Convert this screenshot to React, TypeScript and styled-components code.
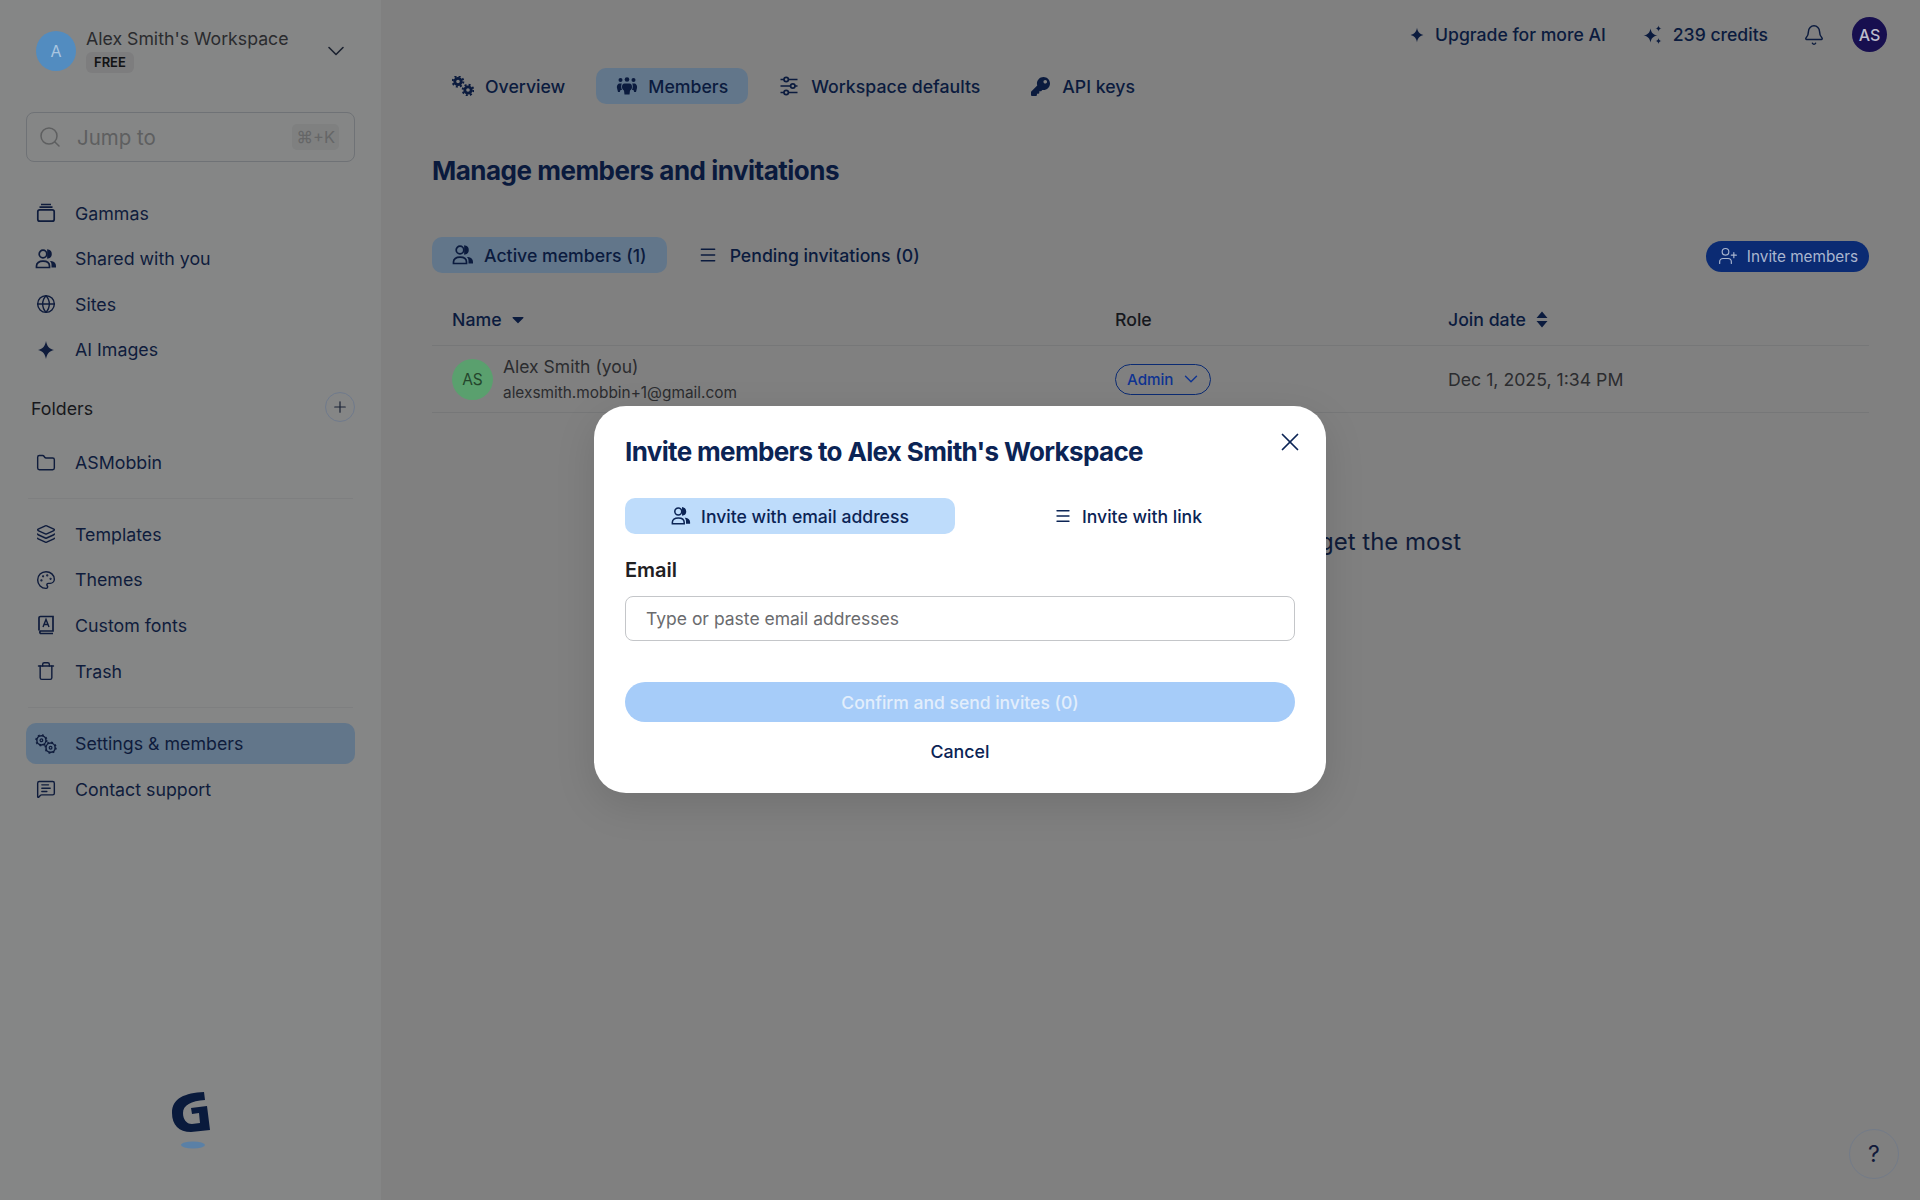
import React from "react";
import styled, { createGlobalStyle } from "styled-components";
import {
  Bell,
  ChevronDown,
  Folder,
  Globe,
  Layers,
  Menu,
  MessageSquareText,
  Palette,
  Plus,
  Search,
  Trash,
  UserPlus,
  X,
} from "lucide-react";
import { FaKey } from "react-icons/fa";

const NAVY = "#0b1b3e";
const FONT = `Inter, "Noto Sans", sans-serif`;

const GlobalStyle = createGlobalStyle`
  html, body {
    margin: 0;
    padding: 0;
    background: #808080;
    font-family: ${FONT};
    color: ${NAVY};
  }
  * { box-sizing: border-box; }
`;

const Page = styled.div`
  display: flex;
  width: 1920px;
  height: 1200px;
  overflow: hidden;
  position: relative;
  background: #808080;
`;

/* sidebar */
const Sidebar = styled.aside`
  display: flex;
  flex-direction: column;
  flex: none;
  width: 381px;
  height: 100%;
  padding: 31px 26px 51px;
  background: #858686;
`;
const WorkspaceRow = styled.div`
  display: flex;
  align-items: flex-start;
  height: 40px;
  padding-left: 10px;
`;
const WorkspaceAvatar = styled.div`
  display: flex;
  align-items: center;
  justify-content: center;
  width: 40px;
  height: 40px;
  flex: none;
  border-radius: 50%;
  background: #528cc0;
  color: #a9c6e0;
  font-size: 16px;
`;
const WorkspaceInfo = styled.div`
  display: flex;
  flex-direction: column;
  align-items: flex-start;
  margin-left: 10px;
  flex: 1;
`;
const WorkspaceName = styled.div`
  font-size: 17.7px;
  line-height: 16px;
  color: #2a2b2e;
  white-space: nowrap;
`;
const PlanBadge = styled.div`
  margin-top: 5px;
  padding: 0 8px;
  height: 21px;
  line-height: 21px;
  border-radius: 6px;
  background: #7d7d7e;
  color: #111214;
  font-size: 13px;
  font-weight: 600;
`;
const Chevron = styled.div`
  display: flex;
  margin: 0 5px 0 0;
  padding-top: 6px;
  color: #1c2230;
`;
const SearchBox = styled.div`
  display: flex;
  align-items: center;
  height: 50px;
  margin-top: 41px;
  padding: 0 15px 0 11px;
  border: 1.5px solid #6f7276;
  border-radius: 8px;
  color: #5e5f60;
  font-size: 20.5px;
`;
const SearchLabel = styled.span`
  flex: 1;
  margin-left: 15px;
`;
const Shortcut = styled.span`
  padding: 3px 4px;
  border-radius: 5px;
  background: #7f8080;
  font-size: 16.5px;
  color: #656667;
`;
const NavList = styled.nav<{ $top: number }>`
  display: flex;
  flex-direction: column;
  gap: 4.6px;
  margin-top: ${(p) => p.$top}px;
`;
const NavItem = styled.div<{ $active?: boolean }>`
  display: flex;
  align-items: center;
  height: 41px;
  padding-left: 9px;
  border-radius: 10px;
  background: ${(p) => (p.$active ? "#62768a" : "transparent")};
  font-size: 17.8px;
  color: #0f1c3c;
`;
const NavIcon = styled.span`
  display: flex;
  justify-content: center;
  width: 22px;
  margin-right: 18px;
  flex: none;
  color: #0f1c3c;
`;
const FoldersRow = styled.div`
  display: flex;
  align-items: center;
  justify-content: space-between;
  height: 32px;
  margin-top: 21px;
  padding-left: 5px;
  font-size: 17.8px;
  color: #17181c;
`;
const FolderLabel = styled.span`
  padding-top: 3px;
`;
const RoundAdd = styled.div`
  display: flex;
  align-items: center;
  justify-content: center;
  width: 30px;
  height: 30px;
  border-radius: 50%;
  border: 1px solid #6f7a8c;
  color: #1a2336;
`;
const Divider = styled.div<{ $above: number; $below: number }>`
  height: 1px;
  margin: ${(p) => p.$above}px 2px ${(p) => p.$below}px;
  background: #7e7f80;
`;
const LogoSlot = styled.div`
  display: flex;
  justify-content: center;
  margin-top: auto;
`;

/* main column */
const Main = styled.main`
  flex: 1;
  min-width: 0;
  padding: 17px 51px 0;
`;
const TopBar = styled.div`
  display: flex;
  align-items: center;
  justify-content: flex-end;
  height: 35px;
  margin-right: -18px;
  font-size: 17.6px;
  font-weight: 500;
`;
const TopItem = styled.div<{ $gap: number }>`
  display: flex;
  align-items: center;
  gap: 10px;
  margin-right: ${(p) => p.$gap}px;
  color: ${NAVY};
`;
const UserAvatar = styled.div`
  display: flex;
  align-items: center;
  justify-content: center;
  width: 35px;
  height: 35px;
  border-radius: 50%;
  background: #170f4f;
  color: #bdbccb;
  font-size: 16px;
  margin-left: 27px;
`;
const PageTabs = styled.div`
  display: flex;
  gap: 11px;
  margin-top: 16px;
`;
const Tab = styled.div<{ $active?: boolean; $gap?: number }>`
  display: flex;
  align-items: center;
  gap: ${(p) => p.$gap ?? 12}px;
  height: 36px;
  padding: 0 20px;
  border-radius: 10px;
  background: ${(p) => (p.$active ? "#62768a" : "transparent")};
  font-size: 17.7px;
  font-weight: 500;
  color: ${NAVY};
  white-space: nowrap;
`;
const Heading = styled.h1`
  margin: 51px 0 0;
  font-size: 26px;
  line-height: 32px;
  font-weight: 700;
  letter-spacing: -0.5px;
  color: #0a1a3d;
`;
const SubTabsRow = styled.div`
  display: flex;
  align-items: center;
  justify-content: space-between;
  margin-top: 50px;
`;
const SubTabs = styled.div`
  display: flex;
  gap: 11px;
`;
const InviteButton = styled.div`
  display: flex;
  align-items: center;
  gap: 9px;
  height: 31px;
  margin-top: 2px;
  padding: 0 11px 0 12px;
  border-radius: 16px;
  background: #0b2b73;
  color: #aab6cf;
  font-size: 15.3px;
`;
const TableRow = styled.div<{ $head?: boolean }>`
  display: grid;
  grid-template-columns: 683px 333px 1fr;
  align-items: center;
  height: ${(p) => (p.$head ? 51 : 67)}px;
  margin-top: ${(p) => (p.$head ? 22 : 0)}px;
  padding-left: 20px;
  border-bottom: 1px solid #767778;
`;
const HeadCell = styled.div`
  display: flex;
  align-items: center;
  gap: 10px;
  font-size: 17.7px;
  font-weight: 500;
  color: ${NAVY};
  padding-bottom: 1px;
`;
const RoleHead = styled(HeadCell)`
  color: #16181d;
  margin-left: -20px;
`;
const DateHead = styled(HeadCell)`
  margin-left: -20px;
`;
const MemberCell = styled.div`
  display: flex;
  align-items: center;
  gap: 10px;
`;
const MemberAvatar = styled.div`
  display: flex;
  align-items: center;
  justify-content: center;
  width: 41px;
  height: 41px;
  border-radius: 50%;
  background: #5aa06e;
  color: #24452c;
  font-size: 15.5px;
`;
const MemberText = styled.div`
  display: flex;
  flex-direction: column;
  gap: 8px;
  padding-top: 1px;
`;
const MemberName = styled.div`
  font-size: 17.5px;
  line-height: 18px;
  color: #2b2c2f;
`;
const MemberMail = styled.div`
  font-size: 15.4px;
  line-height: 18px;
  color: #2b2c2f;
`;
const RolePill = styled.div`
  display: inline-flex;
  align-items: center;
  justify-content: space-between;
  width: 96px;
  height: 31px;
  margin-left: -20px;
  padding: 0 8px 0 11px;
  border: 1.5px solid #0b2b73;
  border-radius: 16px;
  color: #0e3391;
  font-size: 15.2px;
  font-weight: 500;
`;
const DateCell = styled.div`
  margin-left: -20px;
  font-size: 17.7px;
  color: #2b2c2f;
`;
const Notice = styled.div`
  display: flex;
  justify-content: flex-end;
  margin-top: 116px;
  padding-right: 408px;
  font-size: 24px;
  line-height: 26px;
  color: #0f1b38;
`;
const HelpButton = styled.div`
  position: absolute;
  right: 21px;
  bottom: 21px;
  display: flex;
  align-items: center;
  justify-content: center;
  width: 50px;
  height: 50px;
  border-radius: 50%;
  border: 1.5px solid #737b88;
  background: #808080;
  color: #11193a;
  font-size: 23px;
`;

/* modal */
const Overlay = styled.div`
  position: absolute;
  inset: 0;
  display: flex;
  align-items: center;
  justify-content: center;
  padding-bottom: 1px;
`;
const Modal = styled.div`
  position: relative;
  width: 732px;
  height: 387px;
  padding: 30px 31px 0;
  border-radius: 32px;
  background: #fff;
  box-shadow: 0 12px 40px rgba(0, 0, 0, 0.12);
`;
const ModalTitle = styled.h2`
  margin: 0;
  font-size: 26px;
  line-height: 32px;
  font-weight: 700;
  letter-spacing: -0.65px;
  color: #0b2455;
`;
const CloseIcon = styled.div`
  position: absolute;
  top: 21px;
  right: 21px;
  color: #0b2455;
  display: flex;
`;
const ModalTabs = styled.div`
  display: grid;
  grid-template-columns: 330px 1fr;
  gap: 10px;
  margin-top: 30px;
`;
const ModalTab = styled.div<{ $active?: boolean }>`
  display: flex;
  align-items: center;
  justify-content: center;
  gap: 10px;
  height: 36px;
  padding-right: ${(p) => (p.$active ? 0 : 4)}px;
  border-radius: 10px;
  background: ${(p) => (p.$active ? "#bedcfb" : "transparent")};
  color: #0b2455;
  font-size: 17.6px;
  font-weight: 500;
`;
const FieldLabel = styled.div`
  margin-top: 24px;
  font-size: 20px;
  line-height: 24px;
  font-weight: 600;
  color: #1f2023;
`;
const EmailInput = styled.input`
  display: block;
  width: 100%;
  height: 45px;
  margin-top: 14px;
  padding: 0 20px;
  border: 1.5px solid #c4c6c9;
  border-radius: 8px;
  outline: none;
  font-family: ${FONT};
  font-size: 17.5px;
  &::placeholder {
    color: #6a6b6e;
    opacity: 1;
  }
`;
const ConfirmButton = styled.div`
  display: flex;
  align-items: center;
  justify-content: center;
  height: 40px;
  margin-top: 41px;
  border-radius: 20px;
  background: #a6ccf9;
  color: #e2eefc;
  font-size: 17.5px;
  font-weight: 500;
`;
const CancelLink = styled.div`
  margin-top: 18px;
  text-align: center;
  font-size: 17.8px;
  line-height: 24px;
  font-weight: 500;
  color: #0b2455;
`;

/* drawn icons */
const Sparkle = ({ size = 20 }: { size?: number }) => (
  <svg width={size} height={size} viewBox="0 0 20 20" fill="currentColor">
    <path d="M10 1c.9 5 3 7.700 8 9-5 1.300-7.100 4-8 9-.9-5-3-7.700-8-9 5-1.300 7.100-4 8-9z" />
  </svg>
);
const Sparkles = () => (
  <svg width="20" height="20" viewBox="0 0 20 20" fill="currentColor">
    <path d="M7.500 3.500c.8 4.300 2.600 6.200 7 7-4.400.8-6.200 2.700-7 7-.8-4.300-2.600-6.200-7-7 4.400-.8 6.200-2.700 7-7z" />
    <path d="M15.500 .5c.3 1.900 1.100 2.700 3 3-1.900.3-2.700 1.100-3 3-.3-1.900-1.100-2.700-3-3 1.900-.3 2.700-1.100 3-3zM15.500 13c.3 1.900 1.100 2.700 3 3-1.900.3-2.700 1.100-3 3-.3-1.900-1.100-2.700-3-3 1.900-.3 2.700-1.100 3-3z" />
  </svg>
);
const GammasIcon = () => (
  <svg width="20" height="20" viewBox="0 0 20 20" fill="none" stroke="currentColor" strokeWidth="1.700">
    <rect x="1.800" y="6.800" width="16.400" height="11.400" rx="2" />
    <path d="M3.500 4.200h13M5 1.500h10" />
  </svg>
);
const PeopleIcon = ({ size = 22 }: { size?: number }) => (
  <svg width={size} height={size} viewBox="0 0 22 22" fill="none" stroke="currentColor" strokeWidth="1.700">
    <circle cx="8" cy="6" r="3.800" />
    <path d="M1.500 19.500v-1.500c0-3 2.500-4.800 6.500-4.800s6.500 1.800 6.500 4.800v1.500z" />
    <path d="M13 2.300a3.800 3.800 0 0 1 0 7.400z" fill="currentColor" />
    <path d="M16 13c3 .4 5 2 5 5v1.500h-4.500v-2.500c0-1.600-.5-2.800-1.500-4z" fill="currentColor" stroke="none" />
  </svg>
);
const BookIcon = () => (
  <svg width="20" height="20" viewBox="0 0 20 20" fill="none" stroke="currentColor" strokeWidth="1.700">
    <path d="M3 15.500V3a1.500 1.500 0 0 1 1.500-1.500H17v14.500H4.500a1.500 1.500 0 0 0 0 2.500H17" />
    <path d="M7 12l3-7.500 3 7.500M8.200 9.500h3.600" strokeWidth="1.400" />
  </svg>
);
const GearsIcon = () => (
  <svg width="24" height="22" viewBox="0 0 24 22" fill="none" stroke="currentColor">
    <circle cx="7" cy="7" r="5" strokeWidth="1.600" />
    <circle cx="7" cy="7" r="5.900" strokeWidth="1.600" strokeDasharray="2 2.630" />
    <circle cx="7" cy="7" r="1.500" strokeWidth="1.300" />
    <circle cx="17" cy="15" r="5" strokeWidth="1.600" />
    <circle cx="17" cy="15" r="5.900" strokeWidth="1.600" strokeDasharray="2 2.630" />
    <circle cx="17" cy="15" r="1.500" strokeWidth="1.300" />
  </svg>
);
const SolidGears = () => (
  <svg width="22" height="20" viewBox="0 0 22 20" fill="none" stroke="currentColor">
    <circle cx="6" cy="5.500" r="3.200" strokeWidth="2.800" />
    <circle cx="6" cy="5.500" r="5.300" strokeWidth="2" strokeDasharray="2 2.160" />
    <circle cx="16" cy="14" r="3.200" strokeWidth="2.800" />
    <circle cx="16" cy="14" r="5.300" strokeWidth="2" strokeDasharray="2 2.160" />
  </svg>
);
const MembersIcon = () => (
  <svg width="22" height="18" viewBox="0 0 22 18" fill="currentColor">
    <circle cx="4.500" cy="3" r="2" />
    <circle cx="11" cy="2.500" r="2.300" />
    <circle cx="17.500" cy="3" r="2" />
    <path d="M3.500 6.500h2.300C5 8 5 11 6 13H4.500L3.800 15H2L1 11c-.5-2 .8-4.500 2.500-4.500z" />
    <path d="M18.500 6.500h-2.300C17 8 17 11 16 13h1.500l.7 2H20l1-4c.5-2-.8-4.500-2.500-4.500z" />
    <path d="M8.500 6.500h5c1.700 0 2.500 1.500 2.500 3.500 0 2-1 3-2 3.500l-.5 4h-5l-.5-4c-1-.5-2-1.500-2-3.500 0-2 .8-3.500 2.500-3.500z" />
  </svg>
);
const SlidersIcon = () => (
  <svg width="20" height="20" viewBox="0 0 20 20" fill="none" stroke="currentColor" strokeWidth="1.700">
    <path d="M1.500 3.500h3.500M9.500 3.500h9M1.500 10h10M16 10h2.500M1.500 16.500h3.500M9.500 16.500h9" />
    <circle cx="7.200" cy="3.500" r="2.200" />
    <circle cx="13.800" cy="10" r="2.200" />
    <circle cx="7.200" cy="16.500" r="2.200" />
  </svg>
);
const GammaLogo = () => (
  <svg width="40" height="58" viewBox="0 0 40 58">
    <path
      fill="#091a3c"
      d="M33 1C14 2 1 7 1 22c0 12 7 19 19 19l19-2-3-24-16 2 1 6 7-1 1 10-8 1c-6 0-9-5-9-11 0-8 8-12 22-13z"
    />
    <ellipse cx="22" cy="54" rx="12" ry="3.500" fill="#5a80a6" />
  </svg>
);
const SortDown = () => (
  <svg width="12" height="8" viewBox="0 0 12 8" fill="currentColor">
    <path d="M1 1h10a.6.6 0 0 1 .4 1L6.400 7a.6.6 0 0 1-.8 0L.6 2A.6.6 0 0 1 1 1z" />
  </svg>
);
const SortBoth = () => (
  <svg width="12" height="17" viewBox="0 0 12 17" fill="currentColor">
    <path d="M6 .5l5.500 6.500H.5zM6 16.500L.5 10h11z" />
  </svg>
);

const topNav = [
  { label: "Gammas", icon: <GammasIcon /> },
  { label: "Shared with you", icon: <PeopleIcon /> },
  { label: "Sites", icon: <Globe size={20} strokeWidth={1.7} /> },
  { label: "AI Images", icon: <Sparkle /> },
];
const toolNav = [
  { label: "Templates", icon: <Layers size={20} strokeWidth={1.7} /> },
  { label: "Themes", icon: <Palette size={20} strokeWidth={1.7} /> },
  { label: "Custom fonts", icon: <BookIcon /> },
  { label: "Trash", icon: <Trash size={20} strokeWidth={1.7} /> },
];

const App = () => {
  return (
    <Page>
      <GlobalStyle />
      <Sidebar>
        <WorkspaceRow>
          <WorkspaceAvatar>A</WorkspaceAvatar>
          <WorkspaceInfo>
            <WorkspaceName>Alex Smith's Workspace</WorkspaceName>
            <PlanBadge>FREE</PlanBadge>
          </WorkspaceInfo>
          <Chevron>
            <ChevronDown size={28} strokeWidth={1.4} />
          </Chevron>
        </WorkspaceRow>
        <SearchBox>
          <Search size={24} strokeWidth={1.5} />
          <SearchLabel>Jump to</SearchLabel>
          <Shortcut>⌘+K</Shortcut>
        </SearchBox>
        <NavList $top={30.5}>
          {topNav.map((item) => (
            <NavItem key={item.label}>
              <NavIcon>{item.icon}</NavIcon>
              {item.label}
            </NavItem>
          ))}
        </NavList>
        <FoldersRow>
          <FolderLabel>Folders</FolderLabel>
          <RoundAdd>
            <Plus size={18} strokeWidth={1.6} />
          </RoundAdd>
        </FoldersRow>
        <NavList $top={19}>
          <NavItem>
            <NavIcon>
              <Folder size={20} strokeWidth={1.7} />
            </NavIcon>
            ASMobbin
          </NavItem>
        </NavList>
        <Divider $above={14.5} $below={15} />
        <NavList $top={0}>
          {toolNav.map((item) => (
            <NavItem key={item.label}>
              <NavIcon>{item.icon}</NavIcon>
              {item.label}
            </NavItem>
          ))}
        </NavList>
        <Divider $above={15.5} $below={15} />
        <NavList $top={0}>
          <NavItem $active>
            <NavIcon>
              <GearsIcon />
            </NavIcon>
            Settings &amp; members
          </NavItem>
          <NavItem>
            <NavIcon>
              <MessageSquareText size={20} strokeWidth={1.7} />
            </NavIcon>
            Contact support
          </NavItem>
        </NavList>
        <LogoSlot>
          <GammaLogo />
        </LogoSlot>
      </Sidebar>

      <Main>
        <TopBar>
          <TopItem $gap={37}>
            <Sparkle size={16} />
            Upgrade for more AI
          </TopItem>
          <TopItem $gap={35}>
            <Sparkles />
            239 credits
          </TopItem>
          <Bell size={22} strokeWidth={1.6} />
          <UserAvatar>AS</UserAvatar>
        </TopBar>
        <PageTabs>
          <Tab $gap={11}>
            <SolidGears />
            Overview
          </Tab>
          <Tab $active $gap={10}>
            <MembersIcon />
            Members
          </Tab>
          <Tab>
            <SlidersIcon />
            Workspace defaults
          </Tab>
          <Tab>
            <FaKey size={19} />
            API keys
          </Tab>
        </PageTabs>
        <Heading>Manage members and invitations</Heading>
        <SubTabsRow>
          <SubTabs>
            <Tab $active $gap={10}>
              <PeopleIcon />
              Active members (1)
            </Tab>
            <Tab>
              <Menu size={20} strokeWidth={1.7} />
              Pending invitations (0)
            </Tab>
          </SubTabs>
          <InviteButton>
            <UserPlus size={20} strokeWidth={1.4} />
            Invite members
          </InviteButton>
        </SubTabsRow>
        <TableRow $head>
          <HeadCell>
            Name
            <SortDown />
          </HeadCell>
          <RoleHead>Role</RoleHead>
          <DateHead>
            Join date
            <SortBoth />
          </DateHead>
        </TableRow>
        <TableRow>
          <MemberCell>
            <MemberAvatar>AS</MemberAvatar>
            <MemberText>
              <MemberName>Alex Smith (you)</MemberName>
              <MemberMail>alexsmith.mobbin+1@gmail.com</MemberMail>
            </MemberText>
          </MemberCell>
          <div>
            <RolePill>
              Admin
              <ChevronDown size={22} strokeWidth={1.5} />
            </RolePill>
          </div>
          <DateCell>Dec 1, 2025, 1:34 PM</DateCell>
        </TableRow>
        <Notice>get the most</Notice>
      </Main>

      <HelpButton>?</HelpButton>

      <Overlay>
        <Modal>
          <CloseIcon>
            <X size={30} strokeWidth={1.4} />
          </CloseIcon>
          <ModalTitle>Invite members to Alex Smith's Workspace</ModalTitle>
          <ModalTabs>
            <ModalTab $active>
              <PeopleIcon size={20} />
              Invite with email address
            </ModalTab>
            <ModalTab>
              <Menu size={18} strokeWidth={1.8} />
              Invite with link
            </ModalTab>
          </ModalTabs>
          <FieldLabel>Email</FieldLabel>
          <EmailInput placeholder="Type or paste email addresses" />
          <ConfirmButton>Confirm and send invites (0)</ConfirmButton>
          <CancelLink>Cancel</CancelLink>
        </Modal>
      </Overlay>
    </Page>
  );
};

export default App;
